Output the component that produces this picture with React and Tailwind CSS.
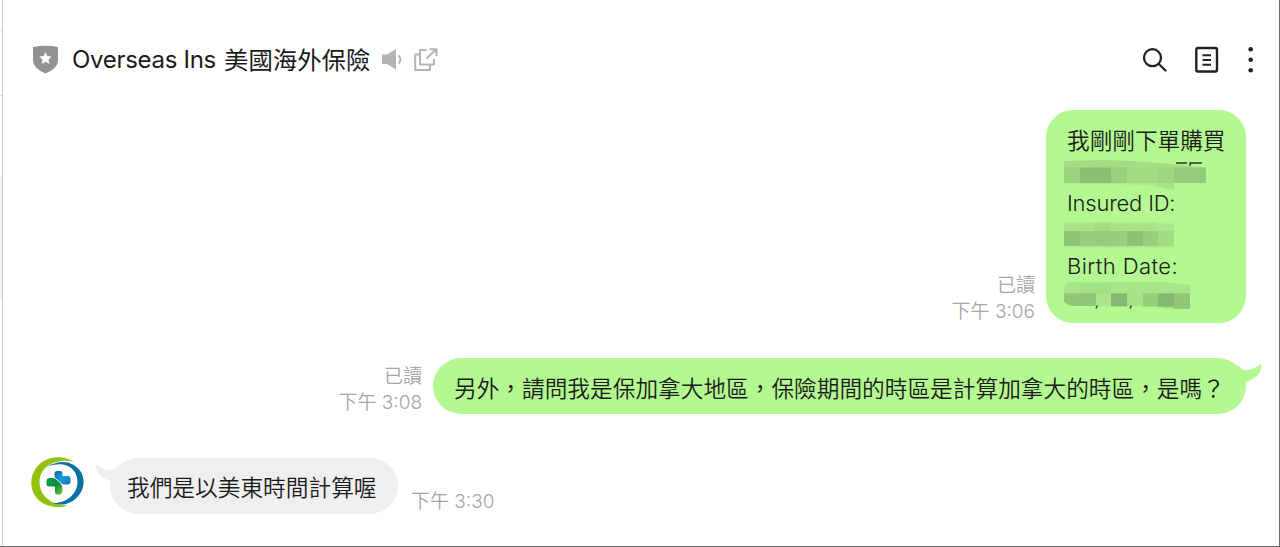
import React from "react";

const PolicyMask = () => (
  <svg className="block" width="160" height="31" viewBox="0 0 160 31">
    <path d="M1 2L40 1Q95 2 138 9H0V3Z" fill="#a4dd84" />
    <rect x="0" y="8.5" width="142" height="15.5" fill="#a0dc80" />
    <rect x="0" y="8.5" width="16" height="15.5" fill="#9bd27e" />
    <rect x="16" y="8.5" width="31" height="15.5" fill="#8dbf73" />
    <rect x="47" y="8.5" width="16" height="15.5" fill="#98d07b" />
    <rect x="94" y="8.5" width="16" height="15.5" fill="#9cd87d" />
    <rect x="110" y="8.5" width="32" height="15.5" fill="#95c97b" />
    <path d="M2 24H110V31Q98 28 80 26Z" fill="#abed8a" />
    <path d="M94 24H110V31L94 28Z" fill="#a6e486" />
    <path d="M112 4h11M126 7V4h12" stroke="#263a20" strokeWidth="1.4" fill="none" />
  </svg>
);

const InsuredMask = () => (
  <svg className="block" width="160" height="32" viewBox="0 0 160 32">
    <rect x="0" y="2.5" width="94" height="8.5" fill="#a8e588" />
    <rect x="31" y="2.5" width="16" height="8.5" fill="#a2de83" />
    <rect x="94" y="3.5" width="16" height="7.5" fill="#a8e888" />
    <rect x="0" y="11" width="110" height="15" fill="#98cf7c" />
    <rect x="0" y="11" width="16" height="15" fill="#8dc374" />
    <rect x="31" y="11" width="16" height="15" fill="#93cb78" />
    <rect x="63" y="11" width="16" height="15" fill="#8bc271" />
    <rect x="94" y="11" width="16" height="15" fill="#a0dc81" />
    <rect x="1" y="26" width="109" height="1.5" fill="#abe98b" />
  </svg>
);

const BirthMask = () => (
  <svg className="block" width="160" height="31" viewBox="0 0 160 31">
    <path d="M0 5Q2 0 8 0H100L126 3V13H0Z" fill="#a8e488" />
    <rect x="16" y="2" width="31" height="11" fill="#a3df83" />
    <path d="M0 11.5H126V27H110L86 24H12Q3 24 0 19Z" fill="#a0dc82" />
    <path d="M0 11.5H32V24H12Q3 24 0 19Z" fill="#91c878" />
    <rect x="32" y="11.5" width="15" height="13" fill="#a9e889" />
    <rect x="47" y="11.5" width="16" height="13" fill="#87b66e" />
    <rect x="63" y="11.5" width="16" height="13" fill="#a7e687" />
    <rect x="79" y="11.5" width="15" height="13" fill="#96cf7b" />
    <rect x="94" y="11.5" width="16" height="13" fill="#86b76e" />
    <rect x="110" y="11.5" width="16" height="15.5" fill="#91c678" />
    <path d="M33.5 23.5l-1.5 3M67.5 23.5l-1.5 3" stroke="#2d4426" strokeWidth="1.4" />
  </svg>
);

const Logo = () => (
  <svg className="block" width="54" height="52" viewBox="0 0 54 52">
    <defs>
      <linearGradient id="bluePart" x1="0" y1="0" x2="1" y2="1">
        <stop offset="0" stopColor="#0a5f9c" />
        <stop offset="0.45" stopColor="#1a9be0" />
        <stop offset="1" stopColor="#0c72b8" />
      </linearGradient>
      <linearGradient id="greenPart" x1="0" y1="0" x2="1" y2="1">
        <stop offset="0" stopColor="#12a04a" />
        <stop offset="0.5" stopColor="#0b8a3c" />
        <stop offset="1" stopColor="#6cc22f" />
      </linearGradient>
    </defs>
    <path d="M43 5C34 -1.500 20 -1.500 11 5C-2 15 -3 32 7 42.500C15 50.500 28 51.500 37 48.500C20 49 8 38 8.500 24C9 10 25 0 43 5Z" fill="#92c20f" />
    <path d="M17 9.500C28 2 43 3.500 50 15C57 28 49 43 35 47C31 48 25 47.500 22 46C35 46.500 46.500 37 46.500 25C46.500 10 33 3.500 17 9.500Z" fill="#0870a3" />
    <path d="M23.5 16.500Q23.5 14 26 14H29Q31.5 14 31.5 16.500V19H36.500Q39.500 19 39.500 22V24.500Q39.500 27.500 36.500 27.500H32.500C28 25.500 23.5 23 23.5 18Z" fill="url(#bluePart)" />
    <path d="M18.500 21H22.5C27.500 22 32 27 31.500 33Q31 37.500 28.500 37.500H26.500Q24 37.500 24 35V29.500H18.500Q15.500 29.500 15.500 27V24Q15.500 21 18.500 21Z" fill="url(#greenPart)" />
    <path d="M22.5 19.500C25 22.500 29 25 32.500 28.500" fill="none" stroke="#fff" strokeWidth="0.9" />
  </svg>
);

const Header = () => (
  <header className="flex h-[110px] items-start pt-[40px] pl-[30px] text-[#1b1b1b]">
    <svg className="mt-[5px] block shrink-0" width="25" height="29" viewBox="0 0 25 29">
      <path d="M0 2Q12.5 -0.5 25 2V16Q25 23 12.5 28.5Q0 23 0 16Z" fill="#929292" />
      <path d="M12.5 7l1.9 4 4.1.6-3 3 .8 4.3-3.8-2.1-3.8 2.1.8-4.3-3-3 4.1-.6z" fill="#fff" />
    </svg>
    <h1 className="ml-[14px] flex w-[299px] shrink-0 font-['Inter','Noto_Sans_CJK_TC',sans-serif] text-[24px] leading-[40px] font-normal whitespace-nowrap">
      <span className="w-[152px] tracking-[-0.3px]">Overseas Ins</span>
      <span className="text-[24.4px]">美國海外保險</span>
    </h1>
    <svg className="mt-[9px] ml-[11px] block shrink-0" width="21" height="21" viewBox="0 0 21 21">
      <path d="M0 5.5H5L14 0V20.5L5 15H0Z" fill="#b4b4b4" />
      <path d="M16.5 6.5Q20.5 10.5 16.5 14.5" fill="none" stroke="#b4b4b4" strokeWidth="1.8" />
    </svg>
    <svg className="mt-[8px] ml-[11px] block shrink-0" width="24" height="24" viewBox="0 0 24 24" fill="none" stroke="#b4b4b4" strokeWidth="2" strokeLinejoin="round">
      <path d="M12.5 2H6V16.5H20V11M6 6.5H1.2V22H16V17M12.5 10.5L22 1.5M15.5 1.2H22.5V8" />
    </svg>
    <div className="mr-[25px] ml-auto flex">
      <svg className="mt-[7px] block" width="26" height="26" viewBox="0 0 26 26" fill="none" stroke="#222" strokeWidth="2.3">
        <circle cx="10.5" cy="10.7" r="8.5" />
        <path d="M16.8 17L23.5 23.5" strokeLinecap="round" />
      </svg>
      <svg className="mt-[6px] ml-[27px] block" width="24" height="28" viewBox="0 0 24 28" fill="none" stroke="#222" strokeWidth="2.4">
        <rect x="1.3" y="2" width="20.7" height="23.5" rx="1.5" />
        <path d="M7.5 9.3h8.5M7.5 14h8.5M7.5 18.7h8.5" strokeWidth="1.9" />
      </svg>
      <svg className="mt-[6px] ml-[29px] block" width="6" height="28" viewBox="0 0 6 28" fill="#222">
        <circle cx="2.7" cy="3.2" r="2.3" />
        <circle cx="2.7" cy="13.7" r="2.3" />
        <circle cx="2.7" cy="24.2" r="2.3" />
      </svg>
    </div>
  </header>
);

const Meta = ({ read, time }) => (
  <div className="text-right text-[19px] leading-[26px] font-[350] whitespace-nowrap text-[#a6a6a6]">
    {read && <div>已讀</div>}
    <div>
      下午 <span className="font-light">{time}</span>
    </div>
  </div>
);

const App = () => {
  return (
    <div className="flex h-[547px] w-full overflow-hidden border-r border-b border-[#6c6c6c] bg-white">
      <aside className="flex w-[3px] shrink-0 flex-col border-r border-[#ccd4dc]">
        <div className="h-[31px] border-b border-[#e2e2e2]" />
        <div className="h-[65px] border-b border-[#e2e2e2]" />
        <div className="mt-[80px] h-[124px] bg-[#f1f1f1]" />
      </aside>

      <main className="w-[1276px] shrink-0 font-['Inter','Noto_Sans_CJK_TC',sans-serif] font-[350] text-[#1b1b1b]">
        <Header />

        {/* Order details */}
        <div className="flex h-[248px] items-start justify-end pr-[33px]">
          <div className="mt-[163px] mr-[11px]">
            <Meta read time="3:06" />
          </div>
          <div className="h-[213px] w-[200px] rounded-[27px] bg-[#b4f891] pt-[15px] pl-[21px] text-[22.65px] leading-[31.4px]">
            <p className="whitespace-nowrap">我剛剛下單購買</p>
            <div className="-ml-[3.5px] h-[31.4px] pt-[3px]"><PolicyMask /></div>
            <p className="text-[22px] leading-[31.4px] tracking-[-0.2px]">Insured ID:</p>
            <div className="-ml-[3.5px] h-[31.4px] pt-px"><InsuredMask /></div>
            <p className="text-[22px] leading-[31.4px] tracking-[0.4px]">Birth Date:</p>
            <div className="-ml-[3.5px] h-[31.4px]"><BirthMask /></div>
          </div>
        </div>

        {/* Time zone question */}
        <div className="flex h-[100px] items-start justify-end pr-[33px]">
          <div className="mt-[6px] mr-[11px]">
            <Meta read time="3:08" />
          </div>
          <div className="relative h-[56px] w-[813px] rounded-[28px] bg-[#b4f891] pl-[21px] text-[22.68px] leading-[61px] whitespace-nowrap">
            另外，請問我是保加拿大地區，保險期間的時區是計算加拿大的時區，是嗎？
            <svg className="absolute top-[5px] -right-[16px]" width="26" height="22" viewBox="0 0 26 22">
              <path d="M2 2L7 7Q17 8 25 1Q27 13 10 19L3 20Z" fill="#b4f891" />
            </svg>
          </div>
        </div>

        {/* Reply */}
        <div className="flex h-[87px] items-start pl-[28px]">
          <div className="-mt-px w-[54px]"><Logo /></div>
          <div className="relative ml-[25px] h-[56px] w-[288px] rounded-[28px] bg-[#efefef] pl-[17px] text-[22.7px] leading-[60px] whitespace-nowrap">
            我們是以美東時間計算喔
            <svg className="absolute top-[5px] -left-[15px]" width="26" height="22" viewBox="0 0 26 22">
              <path d="M24 2L17 7Q8 7 1 1Q0 12 15 18L22 20Z" fill="#efefef" />
            </svg>
          </div>
          <div className="mt-[31px] ml-[13px]">
            <Meta time="3:30" />
          </div>
        </div>
      </main>
    </div>
  );
};

export default App;
